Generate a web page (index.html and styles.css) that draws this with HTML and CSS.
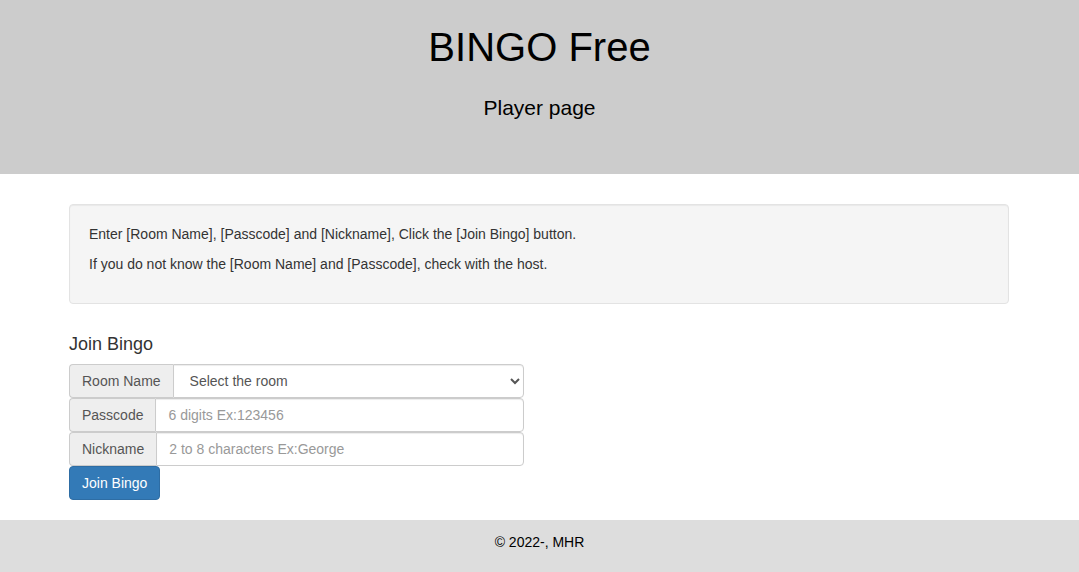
FILE: index.html
```html
<!DOCTYPE html>
<html lang="en">
  <head>
    <meta charset="UTF-8" />
    <meta name="viewport" content="width=device-width, initial-scale=1.0" />
    <title>BINGO Free - Player page</title>
    <link rel="stylesheet" href="styles.css">
  </head>
  <body>
    <div class="header">
      <h1 class="header-title">BINGO Free</h1>
      <div class="header-sub">Player page</div>
    </div>

    <div class="container">
      <div class="well">
        <p>Enter [Room Name], [Passcode] and [Nickname], Click the [Join Bingo] button.</p>
        <p>If you do not know the [Room Name] and [Passcode], check with the host.</p>
      </div>

      <h4 class="form-title">Join Bingo</h4>
      <div class="join-form">
        <div class="input-group">
          <span class="addon">Room Name</span>
          <select class="field">
            <option>Select the room</option>
          </select>
        </div>
        <div class="input-group">
          <span class="addon">Passcode</span>
          <input class="field" type="text" placeholder="6 digits Ex:123456" />
        </div>
        <div class="input-group">
          <span class="addon">Nickname</span>
          <input class="field" type="text" placeholder="2 to 8 characters Ex:George" />
        </div>
        <button class="btn-primary" type="button">Join Bingo</button>
      </div>
    </div>

    <div class="footer">&copy; 2022-, MHR</div>
  </body>
</html>
```

FILE: styles.css
```css
body {
  margin: 0;
  font-family: "Liberation Sans", Arial, sans-serif;
  font-size: 14px;
  line-height: 20px;
  color: #333;
  background-color: #fff;
}
.header {
  background-color: #ccc;
  color: #000;
  text-align: center;
  padding: 25px 0 55px;
}
.header-title {
  font-size: 40px;
  font-weight: normal;
  line-height: 44px;
  margin: 0 0 28px;
}
.header-sub {
  font-size: 21px;
  line-height: 22px;
}
.container {
  width: 940px;
  margin: 30px 0 0 69px;
}
.well {
  padding: 19px;
  margin-bottom: 30px;
  background-color: #f5f5f5;
  border: 1px solid #e3e3e3;
  border-radius: 4px;
  box-shadow: inset 0 1px 1px rgba(0, 0, 0, 0.05);
}
.well p {
  margin: 0 0 10px;
}
.form-title {
  font-size: 18px;
  font-weight: normal;
  line-height: 20px;
  margin: 10px 0;
}
.join-form {
  width: 455px;
}
.input-group {
  display: flex;
}
.addon {
  padding: 6px 12px;
  font-size: 14px;
  line-height: 20px;
  color: #555;
  background-color: #eee;
  border: 1px solid #ccc;
  border-right: 0;
  border-radius: 4px 0 0 4px;
  white-space: nowrap;
}
.field {
  flex: 1;
  min-width: 0;
  height: 34px;
  box-sizing: border-box;
  padding: 6px 12px;
  font-family: inherit;
  font-size: 14px;
  line-height: 20px;
  color: #555;
  background-color: #fff;
  border: 1px solid #ccc;
  border-radius: 0 4px 4px 0;
  box-shadow: inset 0 1px 1px rgba(0, 0, 0, 0.075);
  margin: 0;
}
.field::placeholder {
  color: #999;
}
.btn-primary {
  display: block;
  height: 34px;
  padding: 6px 12px;
  font-family: inherit;
  font-size: 14px;
  line-height: 20px;
  color: #fff;
  background-color: #337ab7;
  border: 1px solid #2e6da4;
  border-radius: 4px;
  cursor: pointer;
}
.footer {
  margin-top: 20px;
  padding: 12px 0 20px;
  background-color: #ddd;
  color: #000;
  text-align: center;
}
```
